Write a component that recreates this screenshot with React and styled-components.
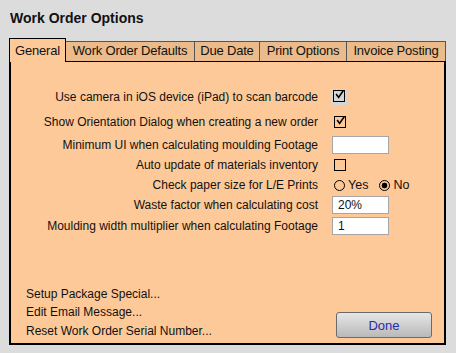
import React, { useState } from 'react'
import styled, { createGlobalStyle } from 'styled-components'

const GlobalStyle = createGlobalStyle`
    html, body {
        margin: 0;
        padding: 0;
        background: #dcdcdc;
        font-family: "Liberation Sans", Arial, Helvetica, sans-serif;
        color: #111;
    }
    * { box-sizing: border-box; }
`;

const tabs = [
    { label: 'General', width: 57 },
    { label: 'Work Order Defaults', width: 129 },
    { label: 'Due Date', width: 65 },
    { label: 'Print Options', width: 87 },
    { label: 'Invoice Posting', width: 99 },
];

function Check({ checked }) {
    return (
        <Box>
            {checked && (
                <svg width="12" height="12" viewBox="0 0 12 12">
                    <path d="M2.2 5.6 L4.8 9.2 L10.6 0.8" fill="none" stroke="#000" strokeWidth="2.2" strokeLinecap="square" />
                </svg>
            )}
        </Box>
    )
}

function App() {
    const [active] = useState(0);
    return (
        <>
            <GlobalStyle />
            <Window>
                <Title>Work Order Options</Title>
                <TabBar>
                    {tabs.map((t, i) => (
                        <Tab key={t.label} width={t.width} $active={i === active} $first={i === 0}>
                            {t.label}
                        </Tab>
                    ))}
                </TabBar>
                <Panel>
                    <Form>
                        <Row $h={24}>
                            <Label>Use camera in iOS device (iPad) to scan barcode</Label>
                            <Control>
                                <Focus><Check checked /></Focus>
                            </Control>
                        </Row>
                        <Row $h={25}>
                            <Label>Show Orientation Dialog when creating a new order</Label>
                            <Control><Pad><Check checked /></Pad></Control>
                        </Row>
                        <Row $h={21}>
                            <Label>Minimum UI when calculating moulding Footage</Label>
                            <Control><Field /></Control>
                        </Row>
                        <Row $h={20}>
                            <Label>Auto update of materials inventory</Label>
                            <Control><Pad><Check /></Pad></Control>
                        </Row>
                        <Row $h={20}>
                            <Label>Check paper size for L/E Prints</Label>
                            <Control>
                                <Radios>
                                    <RadioItem><Radio /> Yes</RadioItem>
                                    <RadioItem><Radio $on /> No</RadioItem>
                                </Radios>
                            </Control>
                        </Row>
                        <Row $h={20}>
                            <Label>Waste factor when calculating cost</Label>
                            <Control><Field>20%</Field></Control>
                        </Row>
                        <Row $h={21}>
                            <Label>Moulding width multiplier when calculating Footage</Label>
                            <Control><Field>1</Field></Control>
                        </Row>
                    </Form>
                    <Footer>
                        <Links>
                            <LinkItem>Setup Package Special...</LinkItem>
                            <LinkItem>Edit Email Message...</LinkItem>
                            <LinkItem>Reset Work Order Serial Number...</LinkItem>
                        </Links>
                        <DoneButton>Done</DoneButton>
                    </Footer>
                </Panel>
            </Window>
        </>
    )
}

const Window = styled.div`
    width: 456px;
    height: 353px;
    padding: 0 10px 0 9px;
    display: flex;
    flex-direction: column;
`;
const Title = styled.h1`
    margin: 0;
    padding: 10px 0 0 1px;
    height: 38px;
    font-size: 14px;
    font-weight: 700;
    line-height: 17px;
`;
const TabBar = styled.div`
    display: flex;
    align-items: flex-end;
    height: 23px;
`;
const Tab = styled.div`
    width: ${p => p.width}px;
    height: ${p => p.$active ? 24 : 20}px;
    padding-top: ${p => p.$active ? 3 : 0}px;
    margin-bottom: ${p => p.$active ? -1 : 0}px;
    position: relative;
    z-index: ${p => p.$active ? 1 : 0};
    background: ${p => p.$active ? '#fec998' : '#ebbb8b'};
    border-top: 1px solid ${p => p.$active ? '#000' : '#555'};
    border-right: 1px solid ${p => p.$active ? '#000' : '#555'};
    border-left: ${p => p.$first ? '1px solid #000' : 'none'};
    font-size: 13px;
    line-height: 18px;
    text-align: center;
    white-space: nowrap;
    letter-spacing: -0.2px;
`;
const Panel = styled.div`
    width: 437px;
    height: 284px;
    background: #fec998;
    border: 2px solid #000;
    border-top-width: 1px;
    display: flex;
    flex-direction: column;
    font-size: 12px;
`;
const Form = styled.div`
    padding-top: 23px;
    display: flex;
    flex-direction: column;
`;
const Row = styled.div`
    height: ${p => p.$h}px;
    display: grid;
    grid-template-columns: 307px 1fr;
    column-gap: 14px;
    align-items: center;
`;
const Label = styled.div`
    text-align: right;
    white-space: nowrap;
    line-height: 14px;
`;
const Control = styled.div`
    display: flex;
    align-items: center;
`;
const Focus = styled.div`
    width: 16px;
    height: 16px;
    margin-left: -1px;
    background: #d6d6d6;
    display: flex;
    align-items: flex-start;
    justify-content: center;
    padding-top: 1px;
`;
const Pad = styled.div`
    padding-left: 2px;
    display: flex;
`;
const Box = styled.span`
    width: 12px;
    height: 12px;
    border: 1px solid #000;
    display: inline-flex;
    align-items: center;
    justify-content: center;
    overflow: visible;
    svg { margin-top: -2px; margin-left: 1px; }
`;
const Field = styled.div`
    width: 57px;
    height: 18px;
    background: #fff;
    border: 1px solid #a6a6a6;
    padding-left: 5px;
    font-size: 12px;
    line-height: 16px;
`;
const Radios = styled.div`
    display: flex;
    gap: 11px;
    padding-left: 2px;
`;
const RadioItem = styled.label`
    display: flex;
    align-items: center;
    gap: 3px;
    font-size: 12.5px;
`;
const Radio = styled.span`
    width: 11px;
    height: 11px;
    border-radius: 50%;
    border: 1px solid #000;
    background: ${p => p.$on ? 'radial-gradient(circle, #000 0 2.6px, #fec998 3.2px)' : 'transparent'};
`;
const Footer = styled.div`
    margin-top: auto;
    display: flex;
    align-items: flex-end;
    justify-content: space-between;
    padding: 0 12px 3px 15px;
`;
const Links = styled.div`
    display: flex;
    flex-direction: column;
`;
const LinkItem = styled.div`
    line-height: 18.5px;
    font-size: 12px;
    cursor: pointer;
`;
const DoneButton = styled.button`
    width: 96px;
    height: 26px;
    margin-bottom: 2px;
    border: 1px solid #6a6a6a;
    border-radius: 3px;
    background: linear-gradient(#e6e6e6, #b9b9b9);
    color: #2a2ab0;
    font-family: "Liberation Sans", Arial, sans-serif;
    font-size: 13px;
    padding: 0;
`;

export default App
